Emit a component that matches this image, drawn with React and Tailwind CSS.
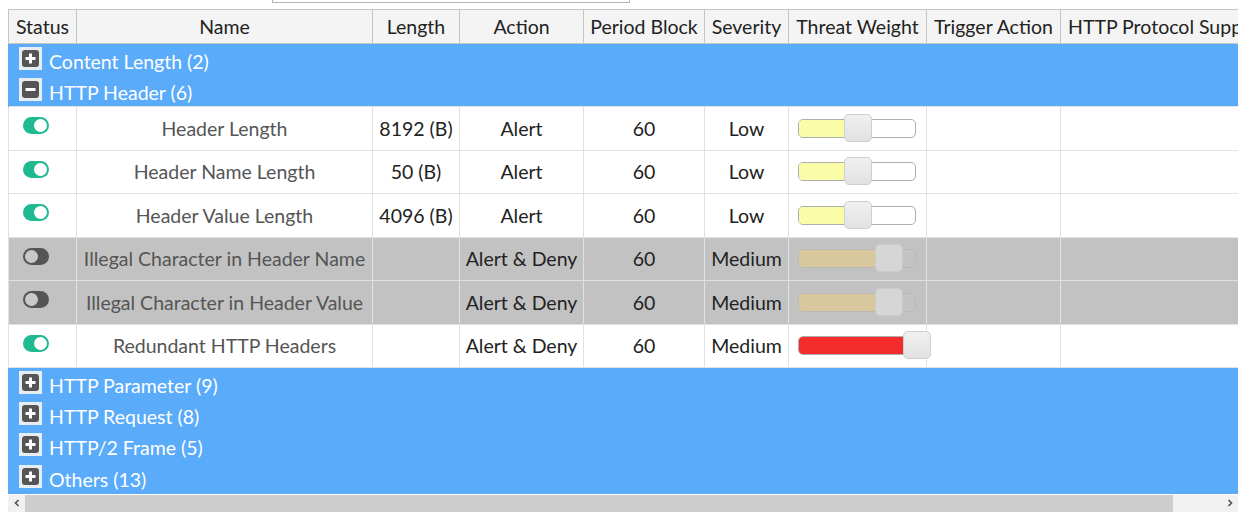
import React from 'react';

const COLS = [68, 296, 87, 124, 121, 84, 138, 134, 230];

const HEADERS = ['Status', 'Name', 'Length', 'Action', 'Period Block', 'Severity', 'Threat Weight', 'Trigger Action', 'HTTP Protocol Support'];

const ROWS = [
  { on: true, name: 'Header Length', length: '8192 (B)', action: 'Alert', period: '60', severity: 'Low', weight: 'low' },
  { on: true, name: 'Header Name Length', length: '50 (B)', action: 'Alert', period: '60', severity: 'Low', weight: 'low' },
  { on: true, name: 'Header Value Length', length: '4096 (B)', action: 'Alert', period: '60', severity: 'Low', weight: 'low' },
  { on: false, name: 'Illegal Character in Header Name', length: '', action: 'Alert & Deny', period: '60', severity: 'Medium', weight: 'medium' },
  { on: false, name: 'Illegal Character in Header Value', length: '', action: 'Alert & Deny', period: '60', severity: 'Medium', weight: 'medium' },
  { on: true, name: 'Redundant HTTP Headers', length: '', action: 'Alert & Deny', period: '60', severity: 'Medium', weight: 'high' },
];

const GroupIcon = ({ open }) => (
  <div className="w-[23px] h-[23px] bg-[#e6edf5] p-[3px] shrink-0">
    <div className="w-full h-full bg-[#555] rounded-[3px] flex items-center justify-center">
      <svg width="11" height="11" viewBox="0 0 11 11">
        <rect x="0.5" y="4" width="10" height="3" fill="#fff" />
        {!open && <rect x="4" y="0.5" width="3" height="10" fill="#fff" />}
      </svg>
    </div>
  </div>
);

const GroupRow = ({ label, open }) => (
  <tr>
    <td colSpan={9} className="bg-[#5aabfa] h-[31.5px] p-0 border-x border-[#5aabfa]">
      <div className="flex items-start gap-[7px] pl-[10px] text-white text-[19.5px] leading-[23px]">
        <GroupIcon open={open} />
        <span className="mt-[3px] whitespace-nowrap">{label}</span>
      </div>
    </td>
  </tr>
);

const Toggle = ({ on }) => (
  on ? (
    <div className="w-[26px] h-[17px] rounded-full bg-[#1fba91] flex items-center justify-end pr-[2px]">
      <div className="w-[13px] h-[13px] rounded-full bg-white" />
    </div>
  ) : (
    <div className="w-[26px] h-[17px] rounded-full bg-[#555] flex items-center pl-[2px]">
      <div className="w-[13px] h-[13px] rounded-full bg-[#c9c9c9]" />
    </div>
  )
);

// threat weight slider
const WeightSlider = ({ level }) => {
  if (level === 'low') {
    return (
      <div className="relative w-[118px] h-[19px] rounded-[5px] border border-[#adadad] bg-white">
        <div className="h-full w-[52px] rounded-l-[4px] bg-[#fbfca7]" />
        <div className="absolute left-[45px] top-[-6px] w-[28px] h-[28px] rounded-[5px] border border-[#cfcfcf] bg-gradient-to-b from-[#f0f0f0] to-[#e2e2e2]" />
      </div>
    );
  }
  if (level === 'medium') {
    return (
      <div className="relative w-[118px] h-[19px] rounded-[5px] border border-[#b9b9b9] bg-[#c3c3c3]">
        <div className="h-full w-[84px] rounded-l-[4px] bg-[#d9c79d]" />
        <div className="absolute left-[76px] top-[-6px] w-[28px] h-[28px] rounded-[5px] border border-[#cbcbcb] bg-[#d6d6d6]" />
      </div>
    );
  }
  return (
    <div className="relative w-[118px] h-[19px] rounded-[5px] border border-[#adadad] bg-white">
      <div className="h-full w-full rounded-[4px] bg-[#f42b2b]" />
      <div className="absolute left-[104px] top-[-6px] w-[28px] h-[28px] rounded-[5px] border border-[#cfcfcf] bg-gradient-to-b from-[#f0f0f0] to-[#e2e2e2]" />
    </div>
  );
};

const DataRow = ({ row }) => {
  const bg = row.on ? 'bg-white' : 'bg-[#c2c2c2]';
  const cell = `h-[43.5px] p-0 border border-[#e1e1e1] text-center text-[19.5px] text-[#222] ${bg}`;
  return (
    <tr>
      <td className={`${cell} align-top`}>
        <div className="pt-[10px] pl-[14px]">
          <Toggle on={row.on} />
        </div>
      </td>
      <td className={`${cell} text-[#555] whitespace-nowrap`}>{row.name}</td>
      <td className={`${cell} whitespace-nowrap`}>{row.length}</td>
      <td className={`${cell} whitespace-nowrap`}>{row.action}</td>
      <td className={cell}>{row.period}</td>
      <td className={cell}>{row.severity}</td>
      <td className={`${cell} text-left`}>
        <div className="pl-[9px]">
          <WeightSlider level={row.weight} />
        </div>
      </td>
      <td className={cell}></td>
      <td className={cell}></td>
    </tr>
  );
};

const App = () => {
  return (
    <div className="w-[1248px] h-[524px] bg-white overflow-hidden font-['Lato','Open_Sans',sans-serif]">
      {/* bottom edge of the search box above */}
      <div className="ml-[272px] w-[358px] h-[3px] border-x border-b border-[#b3b3b3]" />

      <div className="mt-[6px] ml-[8px] w-[1230px] overflow-hidden">
        <table className="table-fixed border-collapse" style={{ width: COLS.reduce((a, b) => a + b, 0) }}>
          <colgroup>
            {COLS.map((w, i) => <col key={i} style={{ width: w }} />)}
          </colgroup>
          <thead>
            <tr>
              {HEADERS.map((h, i) => (
                <th
                  key={h}
                  className={`h-[34px] p-0 bg-[#f4f4f4] border border-[#c6c6c6] text-[19.5px] font-normal text-[#222] whitespace-nowrap ${i === 8 ? 'text-left pl-[7px]' : 'text-center'}`}
                >
                  {h}
                </th>
              ))}
            </tr>
          </thead>
          <tbody>
            <GroupRow label="Content Length (2)" />
            <GroupRow label="HTTP Header (6)" open />
            {ROWS.map((r) => <DataRow key={r.name} row={r} />)}
            <GroupRow label="HTTP Parameter (9)" />
            <GroupRow label="HTTP Request (8)" />
            <GroupRow label="HTTP/2 Frame (5)" />
            <GroupRow label="Others (13)" />
          </tbody>
        </table>
      </div>

      {/* horizontal scrollbar */}
      <div className="ml-[8px] w-[1230px] h-[17px] mt-[1px] flex bg-[#f1f1f1]">
        <div className="w-[17px] flex items-center justify-center">
          <svg width="6" height="8" viewBox="0 0 6 8"><path d="M4.5 1 L1.5 4 L4.5 7" stroke="#505050" strokeWidth="1.6" fill="none" /></svg>
        </div>
        <div className="w-[1148px] h-full bg-[#cdcdcd]" />
        <div className="flex-1" />
        <div className="w-[17px] flex items-center justify-center">
          <svg width="6" height="8" viewBox="0 0 6 8"><path d="M1.5 1 L4.5 4 L1.5 7" stroke="#505050" strokeWidth="1.6" fill="none" /></svg>
        </div>
      </div>
    </div>
  );
};

export default App;
